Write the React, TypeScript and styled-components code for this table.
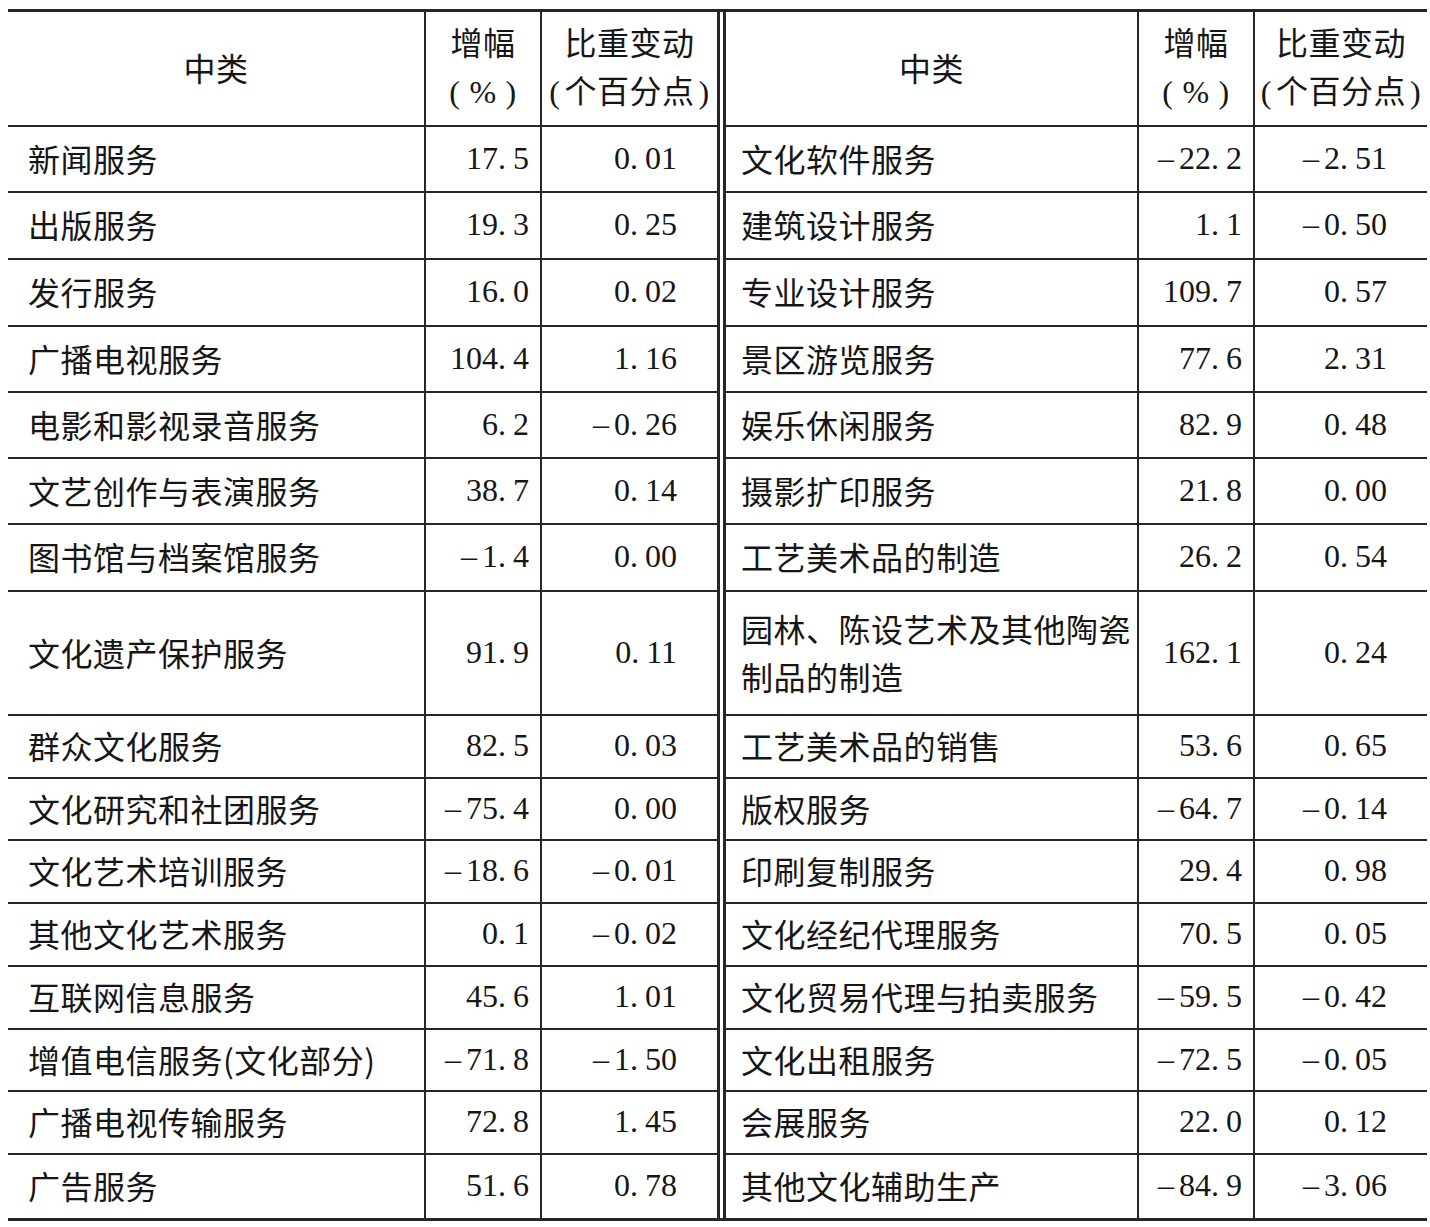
import React from "react";
import styled, { createGlobalStyle } from "styled-components";

const Global = createGlobalStyle`
  html, body { margin: 0; padding: 0; background: #ffffff; }
  body {
    font-family: "Liberation Serif", "Noto Sans CJK SC", serif;
    color: #161616;
  }
`;

const LINE = "#262626";

const Page = styled.div`
  padding: 9px 0 0 8px;
`;

const Frame = styled.div`
  display: flex;
  width: 1419px;
  gap: 3px;
  border-top: 3px solid ${LINE};
  border-bottom: 3px solid ${LINE};
`;

const Half = styled.div<{ $cols: string; $rows: string; $side: "left" | "right" }>`
  display: grid;
  grid-template-columns: ${(p) => p.$cols};
  grid-template-rows: ${(p) => p.$rows};
  ${(p) =>
    p.$side === "left"
      ? `border-right: 3px solid ${LINE};`
      : `border-left: 3px solid ${LINE};`}
`;

const Cell = styled.div<{ $first: boolean; $last: boolean }>`
  box-sizing: border-box;
  display: flex;
  align-items: center;
  border-bottom: ${(p) => (p.$last ? "none" : `2px solid ${LINE}`)};
  border-left: ${(p) => (p.$first ? "none" : `2px solid ${LINE}`)};
  font-size: 32px;
  line-height: 48px;
  white-space: nowrap;
  padding-bottom: 3px;
`;

const HeadCell = styled(Cell)`
  flex-direction: column;
  justify-content: center;
  text-align: center;
  padding-bottom: 4px;
`;

const LabelCell = styled(Cell)<{ $pad: number }>`
  padding-left: ${(p) => p.$pad}px;
  font-family: "Noto Sans CJK SC", "Liberation Serif", sans-serif;
  font-weight: 400;
  letter-spacing: 0.5px;
`;

const NumCell = styled(Cell)<{ $padRight: number }>`
  justify-content: flex-end;
  padding-right: ${(p) => p.$padRight}px;
  font-family: "Liberation Serif", serif;
`;

const HeadLine = styled.span`
  display: block;
  font-family: "Noto Sans CJK SC", "Liberation Serif", sans-serif;
  letter-spacing: 0.5px;
`;

const Paren = styled.span`
  font-family: "Liberation Serif", serif;
`;

const Inner = styled.span`
  padding: 0 4px;
`;

const Percent = styled.span`
  font-family: "Liberation Serif", serif;
  padding: 0 9px;
`;

const Minus = styled.span`
  margin-right: 5px;
`;

const Dot = styled.span`
  margin-right: 7px;
`;

const Num: React.FC<{ v: string }> = ({ v }) => {
  const neg = v.startsWith("-");
  const abs = neg ? v.slice(1) : v;
  const [i, f] = abs.split(".");
  return (
    <span>
      {neg && <Minus>–</Minus>}
      {i}
      <Dot>.</Dot>
      {f}
    </span>
  );
};

type Row = [string, string, string];

const left: Row[] = [
  ["新闻服务", "17.5", "0.01"],
  ["出版服务", "19.3", "0.25"],
  ["发行服务", "16.0", "0.02"],
  ["广播电视服务", "104.4", "1.16"],
  ["电影和影视录音服务", "6.2", "-0.26"],
  ["文艺创作与表演服务", "38.7", "0.14"],
  ["图书馆与档案馆服务", "-1.4", "0.00"],
  ["文化遗产保护服务", "91.9", "0.11"],
  ["群众文化服务", "82.5", "0.03"],
  ["文化研究和社团服务", "-75.4", "0.00"],
  ["文化艺术培训服务", "-18.6", "-0.01"],
  ["其他文化艺术服务", "0.1", "-0.02"],
  ["互联网信息服务", "45.6", "1.01"],
  ["增值电信服务(文化部分)", "-71.8", "-1.50"],
  ["广播电视传输服务", "72.8", "1.45"],
  ["广告服务", "51.6", "0.78"],
];

const right: Row[] = [
  ["文化软件服务", "-22.2", "-2.51"],
  ["建筑设计服务", "1.1", "-0.50"],
  ["专业设计服务", "109.7", "0.57"],
  ["景区游览服务", "77.6", "2.31"],
  ["娱乐休闲服务", "82.9", "0.48"],
  ["摄影扩印服务", "21.8", "0.00"],
  ["工艺美术品的制造", "26.2", "0.54"],
  ["园林、陈设艺术及其他陶瓷\n制品的制造", "162.1", "0.24"],
  ["工艺美术品的销售", "53.6", "0.65"],
  ["版权服务", "-64.7", "-0.14"],
  ["印刷复制服务", "29.4", "0.98"],
  ["文化经纪代理服务", "70.5", "0.05"],
  ["文化贸易代理与拍卖服务", "-59.5", "-0.42"],
  ["文化出租服务", "-72.5", "-0.05"],
  ["会展服务", "22.0", "0.12"],
  ["其他文化辅助生产", "-84.9", "-3.06"],
];

const heights = [66, 67, 67, 66, 66, 66, 67, 124, 63, 62, 63, 63, 63, 62, 63, 63];
const rowsTemplate = `115px ${heights.map((h) => `${h}px`).join(" ")}`;

const Label: React.FC<{ text: string }> = ({ text }) => {
  const parts = text.split("\n");
  return (
    <span>
      {parts.map((p, idx) => (
        <React.Fragment key={idx}>
          {idx > 0 && <br />}
          {p}
        </React.Fragment>
      ))}
    </span>
  );
};

const Table: React.FC<{ rows: Row[]; side: "left" | "right"; cols: string; pad: number }> = ({
  rows,
  side,
  cols,
  pad,
}) => (
  <Half $cols={cols} $rows={rowsTemplate} $side={side}>
    <HeadCell $first={true} $last={false}>
      <HeadLine>中类</HeadLine>
    </HeadCell>
    <HeadCell $first={false} $last={false}>
      <HeadLine>增幅</HeadLine>
      <HeadLine>
        <Paren>(</Paren>
        <Percent>%</Percent>
        <Paren>)</Paren>
      </HeadLine>
    </HeadCell>
    <HeadCell $first={false} $last={false}>
      <HeadLine>比重变动</HeadLine>
      <HeadLine>
        <Paren>(</Paren>
        <Inner>个百分点</Inner>
        <Paren>)</Paren>
      </HeadLine>
    </HeadCell>
    {rows.map((r, idx) => {
      const last = idx === rows.length - 1;
      return (
        <React.Fragment key={idx}>
          <LabelCell $first={true} $last={last} $pad={pad}>
            <Label text={r[0]} />
          </LabelCell>
          <NumCell $first={false} $last={last} $padRight={11}>
            <Num v={r[1]} />
          </NumCell>
          <NumCell $first={false} $last={last} $padRight={40}>
            <Num v={r[2]} />
          </NumCell>
        </React.Fragment>
      );
    })}
  </Half>
);

export default function App() {
  return (
    <>
      <Global />
      <Page>
        <Frame>
          <Table rows={left} side="left" cols="416px 116px 177px" pad={20} />
          <Table rows={right} side="right" cols="411px 116px 174px" pad={15} />
        </Frame>
      </Page>
    </>
  );
}
